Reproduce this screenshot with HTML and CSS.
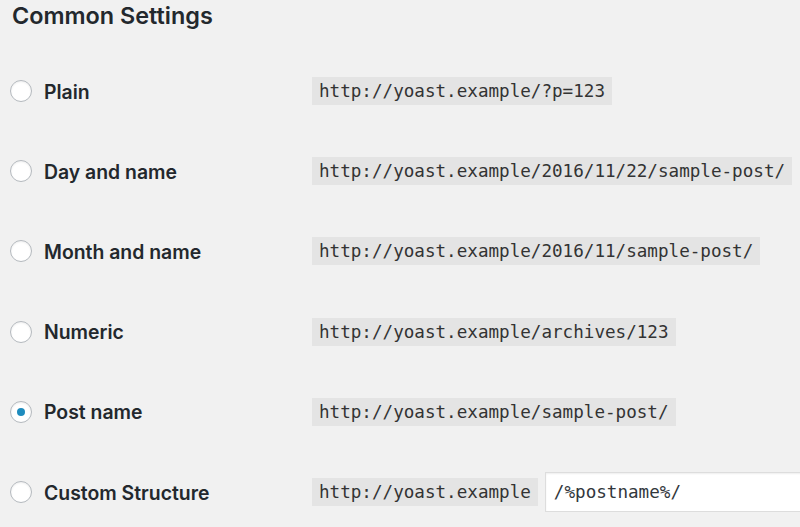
FILE: index.html
```html
<!DOCTYPE html>
<html>
<head>
<meta charset="utf-8">
<link rel="stylesheet" href="styles.css">
</head>
<body>
<div class="page">
  <h2 class="title">Common Settings</h2>
  <div class="rows">
    <div class="row">
      <label class="opt"><span class="radio"></span><span class="label">Plain</span></label>
      <div class="val"><code class="code">http://yoast.example/?p=123</code></div>
    </div>
    <div class="row">
      <label class="opt"><span class="radio"></span><span class="label">Day and name</span></label>
      <div class="val"><code class="code">http://yoast.example/2016/11/22/sample-post/</code></div>
    </div>
    <div class="row">
      <label class="opt"><span class="radio"></span><span class="label">Month and name</span></label>
      <div class="val"><code class="code">http://yoast.example/2016/11/sample-post/</code></div>
    </div>
    <div class="row">
      <label class="opt"><span class="radio"></span><span class="label">Numeric</span></label>
      <div class="val"><code class="code">http://yoast.example/archives/123</code></div>
    </div>
    <div class="row">
      <label class="opt"><span class="radio checked"></span><span class="label">Post name</span></label>
      <div class="val"><code class="code">http://yoast.example/sample-post/</code></div>
    </div>
    <div class="row">
      <label class="opt"><span class="radio"></span><span class="label">Custom Structure</span></label>
      <div class="val"><code class="code">http://yoast.example</code><div class="input">/%postname%/</div></div>
    </div>
  </div>
</div>
</body>
</html>
```
FILE: styles.css
```css
html, body {
  margin: 0;
  padding: 0;
  background: #f1f1f1;
  overflow: hidden;
}
.page {
  padding-left: 10px;
  font-family: Inter, "Liberation Sans", Arial, sans-serif;
  color: #23282d;
}
.title {
  margin: 0;
  padding-left: 2px;
  height: 51px;
  box-sizing: border-box;
  padding-top: 2px;
  font-size: 23.4px;
  line-height: 28px;
  font-weight: 600;
  color: #23282d;
}
.rows {
  display: flex;
  flex-direction: column;
}
.row {
  height: 80.2px;
  display: flex;
  align-items: center;
}
.opt {
  width: 302px;
  flex-shrink: 0;
  display: flex;
  align-items: center;
  gap: 12px;
}
.radio {
  width: 22px;
  height: 22px;
  box-sizing: border-box;
  border-radius: 50%;
  border: 1px solid #b4b9be;
  background: #fff;
  box-shadow: inset 0 1px 2px rgba(0,0,0,0.07);
  display: flex;
  align-items: center;
  justify-content: center;
}
.radio.checked::after {
  content: "";
  width: 8px;
  height: 8px;
  border-radius: 50%;
  background: #1e8cbe;
}
.label {
  font-size: 19.4px;
  line-height: 24px;
  padding-top: 1px;
  font-weight: 600;
  color: #23282d;
}
.val {
  display: flex;
  align-items: center;
  gap: 7px;
}
.code {
  display: block;
  flex-shrink: 0;
  background: #e4e4e4;
  padding: 0 7px;
  height: 28px;
  line-height: 28px;
  font-family: "DejaVu Sans Mono", "Liberation Mono", monospace;
  font-size: 17.6px;
  color: #333;
}
.input {
  width: 260px;
  flex-shrink: 0;
  height: 40px;
  box-sizing: border-box;
  background: #fff;
  border: 1px solid #ddd;
  box-shadow: inset 0 1px 2px rgba(0,0,0,0.07);
  padding-left: 8px;
  line-height: 38px;
  font-family: "DejaVu Sans Mono", "Liberation Mono", monospace;
  font-size: 17.6px;
  color: #32373c;
}
```
